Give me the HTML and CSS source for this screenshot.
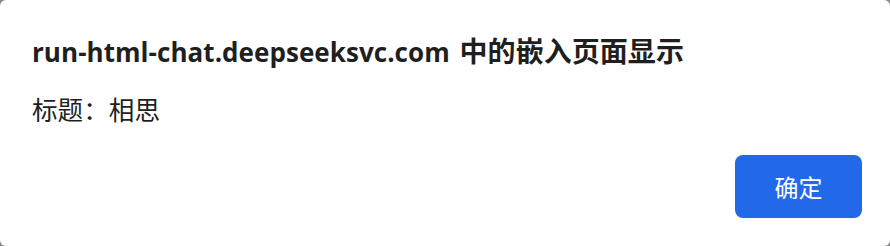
FILE: index.html
```html
<!DOCTYPE html>
<html lang="zh-CN">
<head>
<meta charset="utf-8">
<link rel="stylesheet" href="styles.css">
</head>
<body>
<div class="dialog">
  <h1 class="title">run-html-chat.deepseeksvc.com <span class="cjk">中的嵌入页面显示</span></h1>
  <p class="message">标题：相思</p>
  <div class="actions">
    <button class="ok">确定</button>
  </div>
</div>
</body>
</html>
```
FILE: styles.css
```css
html, body {
  margin: 0;
  padding: 0;
  width: 890px;
  height: 246px;
  background: #8a8a8a;
  overflow: hidden;
}
.dialog {
  box-sizing: border-box;
  width: 890px;
  height: 246px;
  background: #ffffff;
  border-radius: 6px;
  padding: 34px 28px 0 32px;
  font-family: "Open Sans", "Noto Sans CJK SC", sans-serif;
  color: #1f1f1f;
  display: flex;
  flex-direction: column;
}
.title {
  margin: 0;
  font-size: 26px;
  font-weight: 700;
  line-height: 32px;
  white-space: nowrap;
  letter-spacing: 0.05px;
}
.cjk {
  font-family: "Noto Sans CJK SC", sans-serif;
  font-size: 28px;
  margin-left: 3px;
}
.message {
  margin: 25px 0 0 0;
  font-size: 25.6px;
  line-height: 32px;
  font-family: "Noto Sans CJK SC", sans-serif;
}
.actions {
  display: flex;
  justify-content: flex-end;
  margin-top: 30px;
}
.ok {
  width: 127px;
  height: 63px;
  border: none;
  border-radius: 8px;
  background: #2169e9;
  color: #ffffff;
  font-family: "Noto Sans CJK SC", sans-serif;
  font-size: 24px;
  padding: 0;
}
```
